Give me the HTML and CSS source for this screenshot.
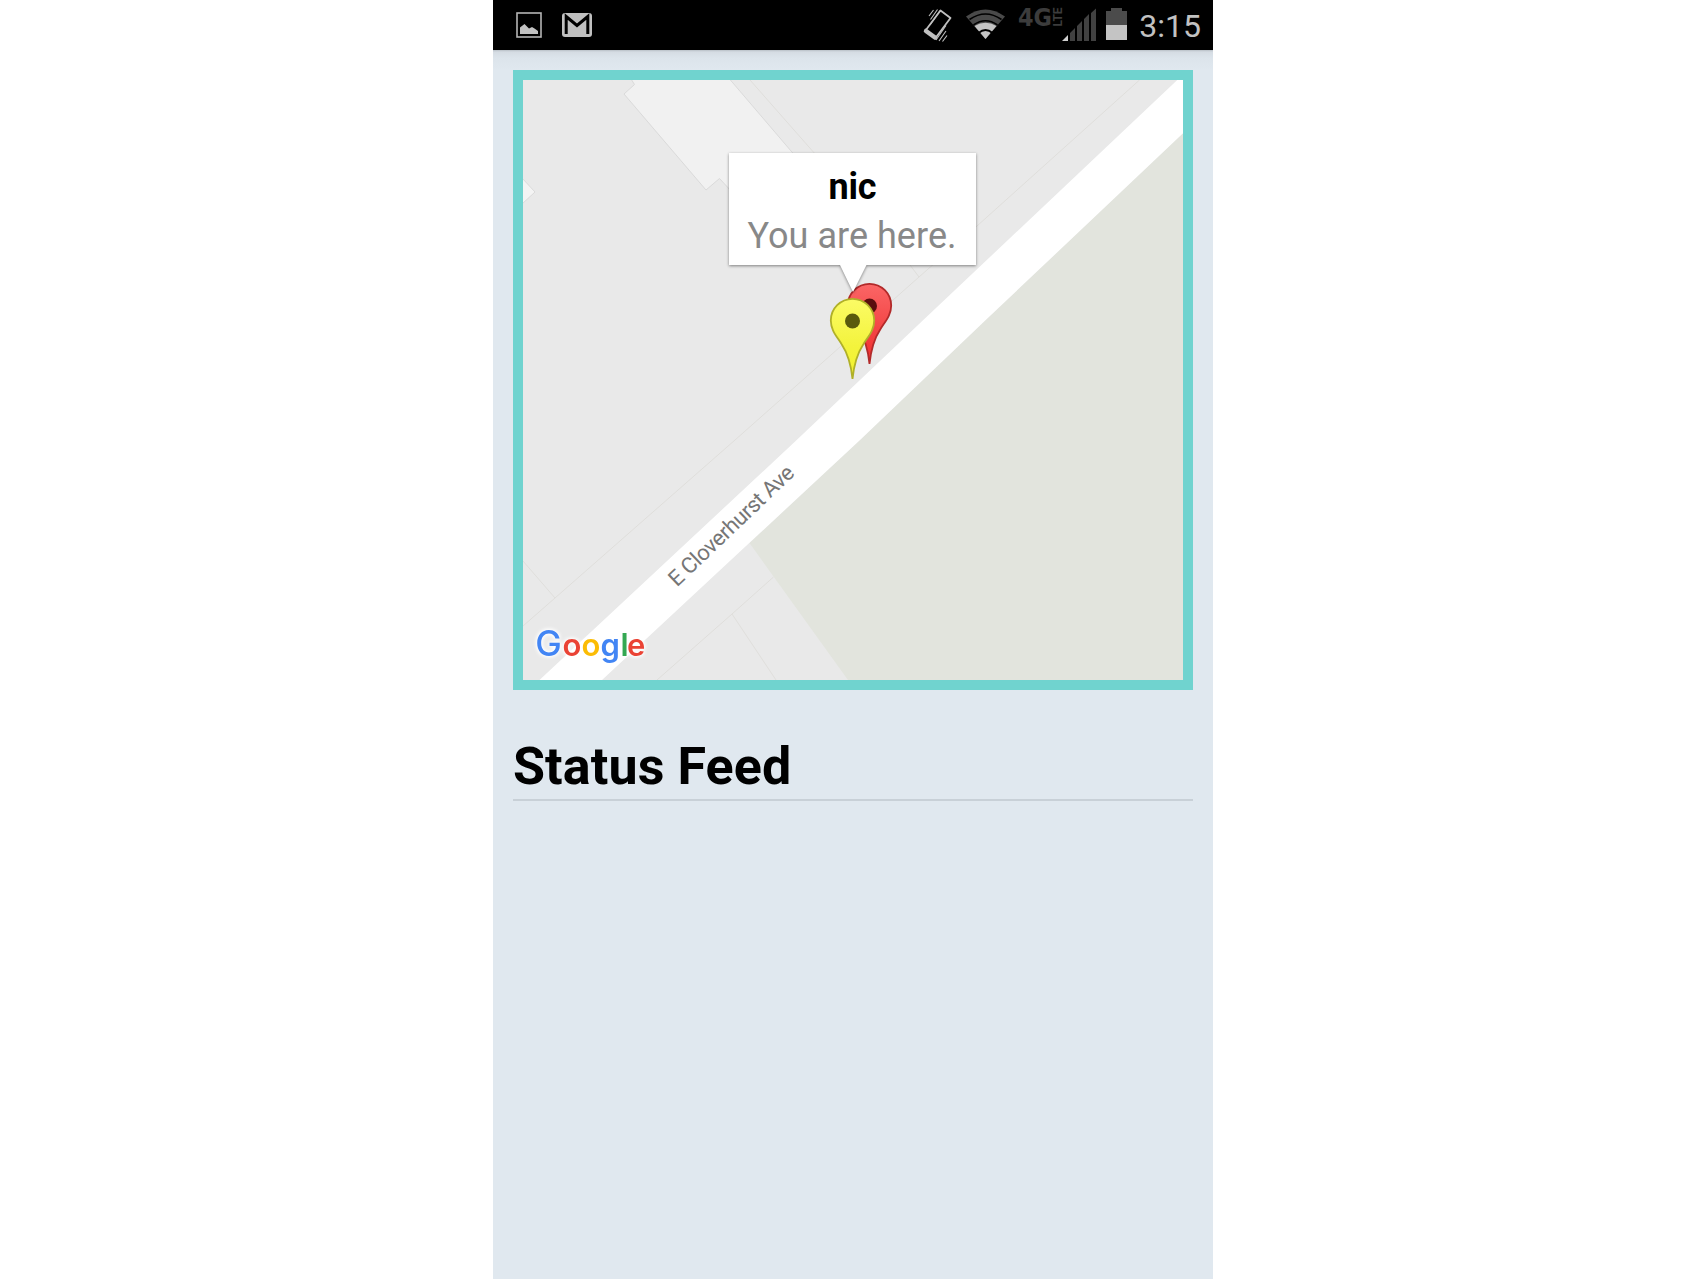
FILE: index.html
```html
<!DOCTYPE html>
<html lang="en">
<head>
<meta charset="utf-8">
<title>Status Feed</title>
<link rel="stylesheet" href="styles.css">
</head>
<body>
<main class="phone">
  <header class="status-bar">
    <svg class="status-icons" viewBox="0 0 720 50" width="720" height="50">
      <rect x="24" y="13" width="24" height="24" fill="none" stroke="#b5b5b5" stroke-width="1.6"/>
      <path d="M27 34V27.500L31.500 24L36 28.500L39 27L41.500 28.500L45 31V34Z" fill="#c2c2c2"/>
      <rect x="69" y="13" width="30" height="24" rx="3" fill="#c0c0c0"/>
      <path d="M73.200 34V16.500L84 25.500L94.800 16.500V34" fill="none" stroke="#000" stroke-width="3"/>
      <g fill="none" stroke="#c0c0c0">
        <path d="M447.500 10.500L457.500 18L442.500 38L432.500 30.500Z" stroke-width="1.8" stroke-linejoin="round"/>
        <path d="M433 31L442 37.500" stroke-width="4.500" stroke-linecap="round"/>
        <path d="M436 16l4.500-6M437.500 19.500l7-10M437 25l10-14.500M453 25.500l-10 14.500M453 31l-7 10M454 35.500l-4.500 6" stroke-width="1.100"/>
      </g>
      <path d="M492.500 39L473 16.500Q492.500 2.500 512 16.500Z" fill="#4a4a4a"/>
      <path d="M492.500 39L481.500 26Q492.500 19.500 503.500 26Z" fill="#c4c4c4"/>
      <path d="M476.500 19.500Q492.500 8.500 508.500 19.500M480.500 25Q492.500 16.500 504.500 25M485.500 33Q492.500 27 499.500 33" fill="none" stroke="#000" stroke-width="1.700"/>
      <text class="network-label" x="525" y="26" textLength="34" lengthAdjust="spacingAndGlyphs">4G</text>
      <text class="network-sub" transform="translate(569 26.500) rotate(-90)" textLength="19">LTE</text>
      <path d="M569 41L575 35V41Z" fill="#d0d0d0"/>
      <path d="M577 41V33L582 28V41ZM584 41V26L589 21V41ZM591 41V19L596 14V41ZM598 41V13L603 8.500V41Z" fill="#414141"/>
      <path d="M613 11H618V8H629V11H634V25H613Z" fill="#4b4b4b"/>
      <rect x="613" y="25" width="21" height="15" fill="#c4c4c4"/>
    </svg>
    <time class="clock">3:15</time>
  </header>

  <div class="content">
    <section class="map">
      <svg class="map-canvas" viewBox="523 80 660 599.500" width="660" height="599.500">
        <defs>
          <linearGradient id="yellow" x1="0" y1="0" x2="0" y2="1"><stop offset="0" stop-color="#fbfb66"/><stop offset=".6" stop-color="#f3f33c"/><stop offset="1" stop-color="#f2f22c"/></linearGradient>
          <linearGradient id="red" x1="0" y1="0" x2="0" y2="1"><stop offset="0" stop-color="#fb6666"/><stop offset=".6" stop-color="#f34343"/><stop offset="1" stop-color="#f22c2c"/></linearGradient>
        </defs>
        <rect x="523" y="80" width="660" height="600" fill="#e9e9e9"/>
        <path d="M631 79L634.500 84.500L624 94L706 190L719.500 178.500L732 192H826L727 76Z" fill="#f1f1f1" stroke="#dadada"/>
        <path d="M522 178L535 192L522 204Z" fill="#f4f4f4" stroke="#dadada"/>
        <path d="M750 80L816 155M1139.500 80L977 226L919 277L735 440L555 598L523 626M910 265L919 277M523 561L555 598M773.500 577L732 614L657 680M732 614L776 680" fill="none" stroke="#dfdedb" stroke-width="1"/>
        <path d="M1184 132V680H848L749.500 543L860 440L985.700 320Z" fill="#e2e4dd"/>
        <path d="M1177.300 80H1183V133.300L985.700 320L860 440L602 680H539.500L796.700 440L923.300 320Z" fill="#fff"/>
        <text class="street" transform="translate(677 587.500) rotate(-43.600)" textLength="164">E Cloverhurst Ave</text>
        <text class="logo" x="535.300 562.600 581.500 600.500 620.600 627" y="656"><tspan class="logo-capital" fill="#4285f4">G</tspan><tspan fill="#ea4335">o</tspan><tspan fill="#fbbc05">o</tspan><tspan fill="#4285f4">g</tspan><tspan fill="#34a853">l</tspan><tspan fill="#ea4335">e</tspan></text>
        <g transform="translate(869.500 283)">
          <path d="M0 81C-1.500 66-5 55-11 46C-16 38-21.700 32-21.700 22.500A21.700 21.700 0 0 1 21.700 22.500C21.700 32 16 38 11 46C5 55 1.500 66 0 81Z" fill="url(#red)" stroke="#b22a2a" stroke-width="1.800"/>
          <circle cy="23" r="7.500" fill="#590d0d"/>
        </g>
        <path class="bubble" d="M729 153H976V265H866.500L853 292L840 265H729Z" fill="#fff"/>
        <g transform="translate(852.500 298)">
          <path d="M0 81C-1.500 66-5 55-11 46C-16 38-21.700 32-21.700 22.500A21.700 21.700 0 0 1 21.700 22.500C21.700 32 16 38 11 46C5 55 1.500 66 0 81Z" fill="url(#yellow)" stroke="#b0b028" stroke-width="1.800"/>
          <circle cy="23" r="7.500" fill="#59590d"/>
        </g>
        <text class="bubble-title" x="852.500" y="199" textLength="48">nic</text>
        <text class="bubble-text" x="852" y="248" textLength="209">You are here.</text>
      </svg>
    </section>
    <h1 class="heading">Status Feed</h1>
  </div>
</main>
</body>
</html>
```
FILE: styles.css
```css
body {
  margin: 0;
  background: #fff;
  font-family: Roboto, "Liberation Sans", sans-serif;
}

.phone {
  width: 720px;
  height: 1279px;
  margin: 0 auto;
  overflow: hidden;
  background: #e0e8ef;
}

.status-bar {
  position: relative;
  height: 50px;
  background: #000;
}

.status-icons {
  display: block;
}

.clock {
  position: absolute;
  right: 12px;
  top: 7px;
  font-size: 32px;
  line-height: 38px;
  color: #c2c2c2;
}

.network-label {
  font: 700 25px "DejaVu Sans", sans-serif;
  fill: #3c3c3c;
}

.network-sub {
  font: 700 12px Roboto, sans-serif;
  fill: #3c3c3c;
}

.content {
  padding: 20px 20px 0;
  background: linear-gradient(#b9c0c6, #d5dce3 2px, #dce4eb 8px, #e0e8ef 20px);
}

.map {
  height: 599.5px;
  border: 10px solid #70d3cf;
}

.map-canvas {
  display: block;
}

.street {
  font-size: 22px;
  fill: #767676;
}

.logo {
  font: 600 31px Inter, sans-serif;
  filter: drop-shadow(0 0 2px #fff) drop-shadow(0 0 1.5px #fff);
}

.logo-capital {
  font-size: 35.5px;
  font-weight: 500;
}

.bubble {
  filter: drop-shadow(0 1px 1.5px rgba(0, 0, 0, 0.45));
}

.bubble-title,
.bubble-text {
  font-size: 36px;
  text-anchor: middle;
}

.bubble-title {
  font-weight: 700;
}

.bubble-text {
  fill: #888;
}

.heading {
  margin: 46.5px 0 0;
  height: 63px;
  border-bottom: 2px solid #c8d0d7;
  font-size: 52px;
  line-height: 61px;
  letter-spacing: 0.1px;
  font-weight: 700;
}
```
